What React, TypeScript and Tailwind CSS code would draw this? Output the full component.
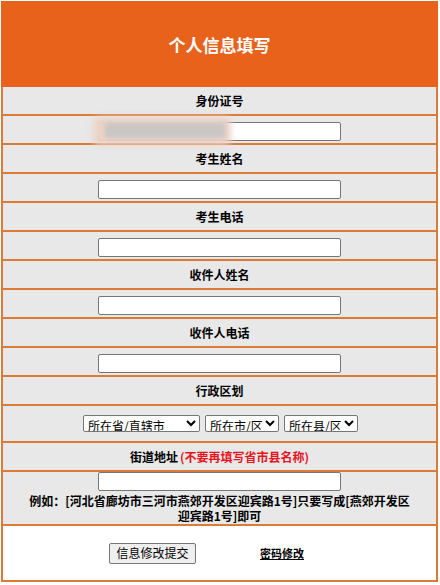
const labelRow = "h-[29px] flex items-center justify-center text-[12px] font-bold text-black border-t-2 border-[#dc7a38]"
const inputRow = "h-[29px] flex justify-center pt-[6px] border-t-2 border-[#dc7a38]"
const inputCls = "w-[243px] h-[19px] bg-white border border-[#767676] rounded-[2px] outline-none"

function LabelRow({ text, first }: { text: string; first?: boolean }) {
  return <div className={first ? "h-[27px] flex items-center justify-center text-[12px] font-bold text-black" : labelRow}>{text}</div>
}

function InputRow() {
  return (
    <div className={inputRow}>
      <input className={inputCls} />
    </div>
  )
}

export default function App() {
  return (
    <div className="bg-white w-[440px] h-[585px] pt-px font-['Noto_Sans_CJK_SC',sans-serif]">
      <div className="ml-px w-[437px]">
        {/* header */}
        <div className="h-[86px] bg-[#e8621c] flex items-center justify-center">
          <h1 className="text-[17px] font-bold text-white leading-none">个人信息填写</h1>
        </div>

        <div className="bg-[#e8e8e8] border-x-2 border-b-2 border-[#dc7a38] leading-[15px]">
          <LabelRow text="身份证号" first />
          <div className={inputRow + " relative"}>
            <input className={inputCls} />
            {/* blurred id number */}
            <div className="absolute left-[90px] top-[1px] w-[138px] h-[28px] bg-[#ecd3c7] blur-[3px] rounded-md"></div>
            <div className="absolute left-[102px] top-[7px] w-[120px] h-[15px] bg-[#c9c6c4] blur-[2px]"></div>
          </div>
          <LabelRow text="考生姓名" />
          <InputRow />
          <LabelRow text="考生电话" />
          <InputRow />
          <LabelRow text="收件人姓名" />
          <InputRow />
          <LabelRow text="收件人电话" />
          <InputRow />
          <LabelRow text="行政区划" />

          {/* selects */}
          <div className="h-[37px] flex items-center justify-center gap-[5px] pl-[2px] border-t-2 border-[#dc7a38]">
            <select className="w-[117px] h-[17px] text-[12px] bg-white border border-[#767676] rounded-[2px]">
              <option>所在省/直辖市</option>
            </select>
            <select className="w-[74px] h-[17px] text-[12px] bg-white border border-[#767676] rounded-[2px]">
              <option>所在市/区</option>
            </select>
            <select className="w-[74px] h-[17px] text-[12px] bg-white border border-[#767676] rounded-[2px]">
              <option>所在县/区</option>
            </select>
          </div>

          <div className={labelRow}>
            街道地址<span className="text-[#e6141e] ml-[2px]">(不要再填写省市县名称)</span>
          </div>

          {/* street input + example */}
          <div className="h-[54px] flex flex-col items-center border-t-2 border-[#dc7a38] px-[22px]">
            <input className={inputCls} />
            <p className="text-[12px] font-bold text-black text-center leading-[15px] mt-[2px]">
              例如：[河北省廊坊市三河市燕郊开发区迎宾路1号]只要写成[燕郊开发区迎宾路1号]即可
            </p>
          </div>

          {/* actions */}
          <div className="h-[56px] bg-white flex items-center pl-[106px] border-t-2 border-[#dc7a38]">
            <button className="w-[87px] h-[21px] text-[12px] text-black bg-[#efefef] border border-[#767676] rounded-[2px] leading-none">
              信息修改提交
            </button>
            <a href="#" className="ml-[64px] text-[11px] font-bold text-black underline">
              密码修改
            </a>
          </div>
        </div>
      </div>
    </div>
  )
}
